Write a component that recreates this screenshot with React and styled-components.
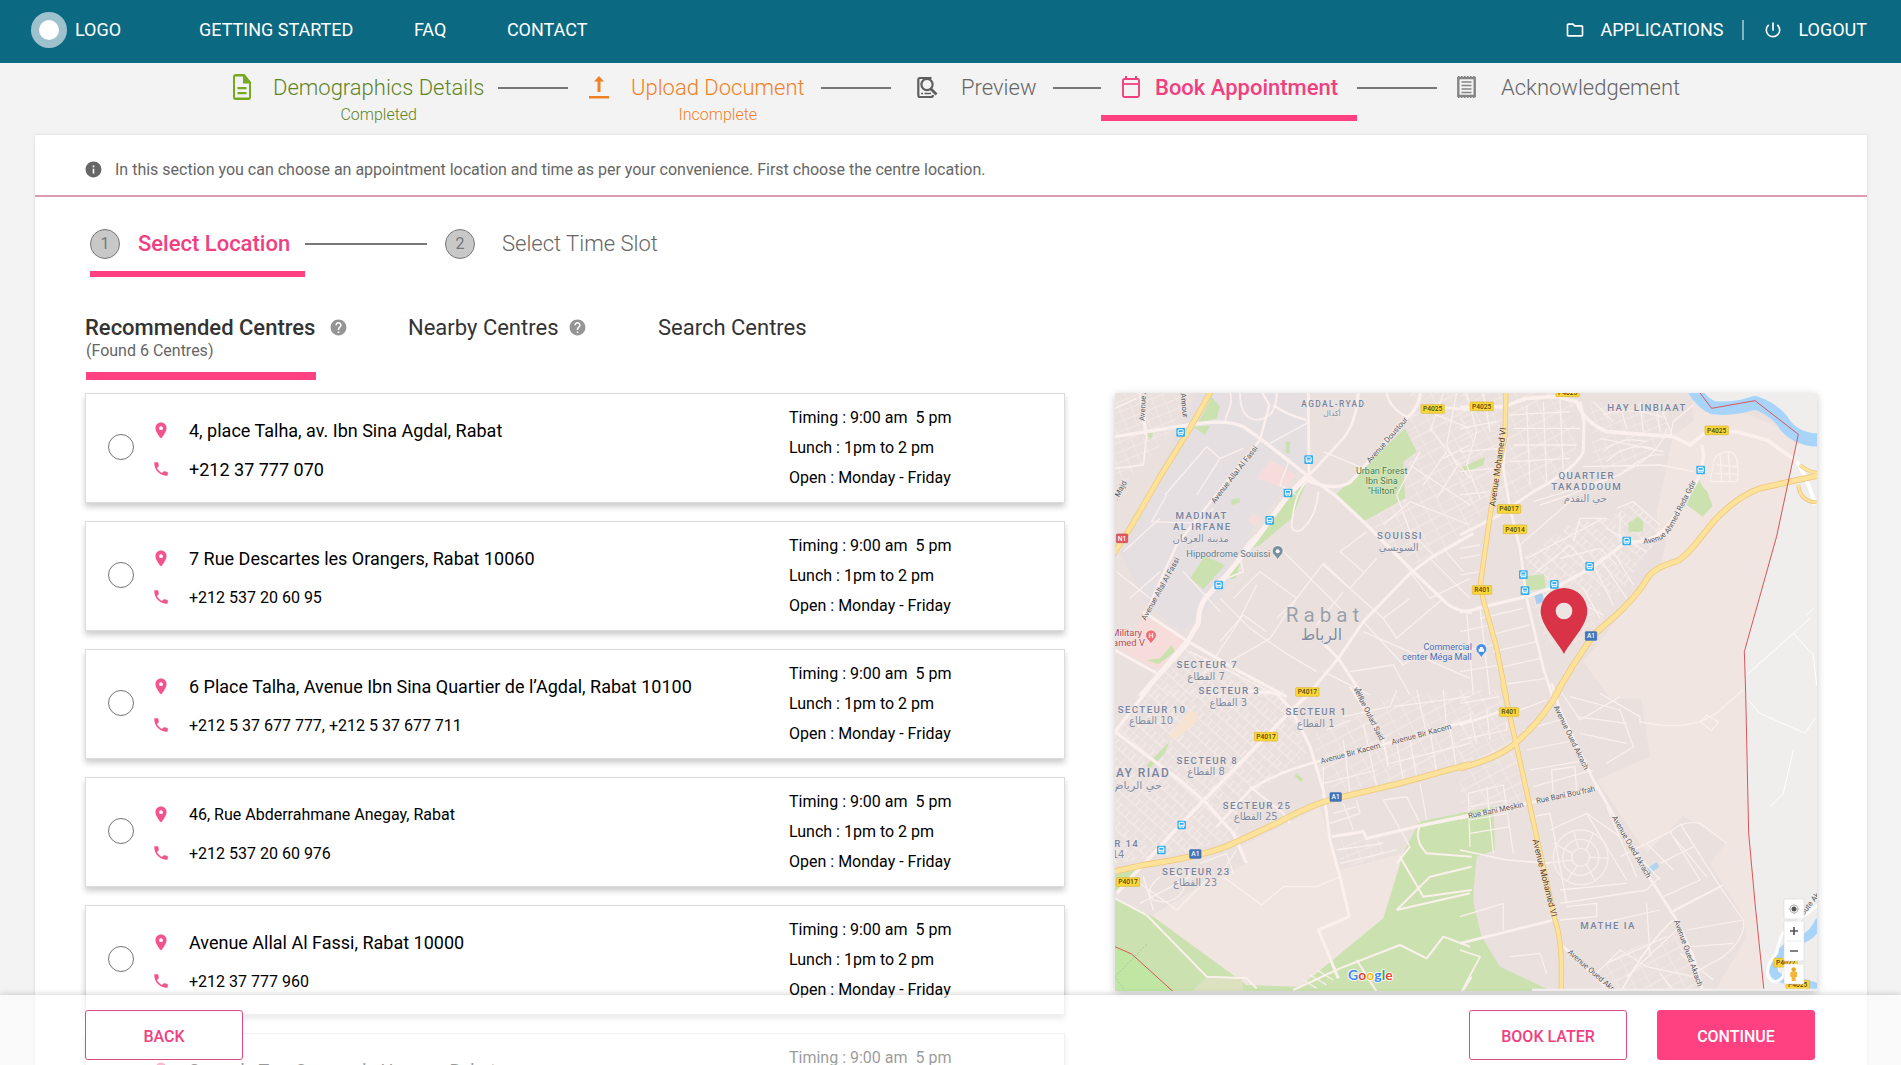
import React from "react";
import styled, { createGlobalStyle, css } from "styled-components";
import {
  MdInfo, MdHelp, MdPlace, MdPhone, MdOutlineFolder, MdPowerSettingsNew,
} from "react-icons/md";

const PINK = "#ff4081";
const PINK_TEXT = "#f0407f";

const GlobalStyle = createGlobalStyle`
  *, *::before, *::after { box-sizing: border-box; }
  body {
    margin: 0;
    background: #f3f3f3;
    font-family: Roboto, "Liberation Sans", sans-serif;
    overflow: hidden;
  }
`;

const Page = styled.div`
  position: relative;
  width: 1901px;
  height: 1065px;
  overflow: hidden;
  background: #f3f3f3;
`;

/* ---------- header ---------- */

const Header = styled.header`
  display: flex;
  align-items: center;
  height: 63px;
  padding: 0 34px 3px 31px;
  background: #0c6982;
  color: #fff;
  font-size: 18px;
`;

const Logo = styled.div`
  display: flex;
  align-items: center;
  gap: 8px;
  width: 168px;
`;

const LogoName = styled.span`
  padding-bottom: 2px;
`;

const LogoMark = styled.span`
  display: grid;
  place-items: center;
  width: 36px;
  height: 36px;
  border-radius: 50%;
  background: #9dc2cd;
  &::after {
    content: "";
    width: 20px;
    height: 20px;
    border-radius: 50%;
    background: #fff;
  }
`;

const Nav = styled.nav`
  display: flex;
  gap: 60.5px;
  flex: 1;
  padding-bottom: 2px;
`;

const UserLinks = styled.div`
  display: flex;
  align-items: center;
  padding-bottom: 1px;
`;

const UserLink = styled.span`
  display: flex;
  align-items: center;
  gap: ${(p) => p.$gap}px;
`;

const Divider = styled.span`
  width: 2px;
  height: 20px;
  margin: 0 19px 0 19px;
  background: #86b4c1;
`;

/* ---------- progress stepper ---------- */

const Stepper = styled.div`
  display: flex;
  height: 72px;
  padding-left: 233px;
`;

const Step = styled.div`
  display: flex;
  align-items: flex-start;
  flex: none;
  gap: ${(p) => p.$gap}px;
  width: ${(p) => p.$width}px;
  height: 58px;
  padding: 11px 0 0 ${(p) => p.$inset || 0}px;
  color: ${(p) => p.$color};
  border-bottom: 6px solid ${(p) => (p.$active ? PINK : "transparent")};
  svg { flex: none; }
`;

const StepText = styled.div`
  display: flex;
  flex-direction: column;
  align-items: center;
  gap: 3px;
  white-space: nowrap;
`;

const StepName = styled.span`
  font-size: 22px;
  line-height: 28px;
  font-weight: ${(p) => (p.$active ? 500 : 300)};
`;

const StepState = styled.span`
  font-size: 16px;
  line-height: 20px;
  font-weight: 300;
`;

const Connector = styled.span`
  flex: none;
  width: ${(p) => p.$width}px;
  height: 2px;
  margin: ${(p) => p.$top}px ${(p) => p.$after}px 0 ${(p) => p.$before}px;
  background: #777;
`;

/* ---------- card ---------- */

const Panel = styled.main`
  width: 1832px;
  height: 930px;
  margin-left: 35px;
  background: #fff;
  box-shadow: 0 0 3px rgba(0, 0, 0, 0.12);
`;

const Notice = styled.div`
  display: flex;
  align-items: center;
  gap: 12.5px;
  height: 62px;
  padding: 8px 0 0 48.5px;
  border-bottom: 2px solid #d99ab2;
  color: #666;
  font-size: 16px;
`;

const SubSteps = styled.div`
  display: flex;
  align-items: flex-start;
  height: 82px;
  margin: 31px 0 0 55px;
`;

const SubStep = styled.div`
  display: flex;
  align-items: center;
  flex: none;
  gap: ${(p) => p.$gap}px;
  width: ${(p) => p.$width}px;
  height: 49px;
  padding-bottom: 12px;
  font-size: 22px;
  white-space: nowrap;
  font-weight: ${(p) => (p.$active ? 500 : 300)};
  color: ${(p) => (p.$active ? PINK_TEXT : "#666")};
  border-bottom: 6px solid ${(p) => (p.$active ? PINK : "transparent")};
`;

const StepNumber = styled.span`
  display: grid;
  place-items: center;
  width: 30px;
  height: 30px;
  border: 1px solid #777;
  border-radius: 50%;
  background: #c8c8c8;
  color: #777;
  font-size: 16px;
  font-weight: 400;
`;

const Tabs = styled.div`
  display: flex;
  height: 83px;
  padding-left: 50px;
`;

const Tab = styled.div`
  flex: none;
  width: ${(p) => p.$width}px;
  color: #333;
  padding-top: 3px;
`;

const TabTitle = styled.div`
  display: flex;
  align-items: center;
  gap: ${(p) => p.$gap || 9.5}px;
  height: 28px;
  font-size: 22px;
  white-space: nowrap;
  font-weight: ${(p) => (p.$active ? 500 : 400)};
  svg { color: #959595; margin-top: 1px; }
`;

const TabNote = styled.div`
  height: 31px;
  padding-left: 1px;
  color: #666;
  font-size: 16px;
  line-height: 20px;
`;

const TabBar = styled.div`
  width: 230px;
  height: 8px;
  margin: 0 0 0 1px;
  background: ${PINK};
`;

const Content = styled.div`
  display: flex;
  gap: 50px;
  padding-left: 50px;
`;

const CentreList = styled.div`
  display: flex;
  flex-direction: column;
  gap: 18px;
  width: 980px;
`;

const CentreCard = styled.article`
  display: flex;
  align-items: center;
  height: 110px;
  padding-left: 22px;
  background: #fff;
  border: 1px solid #dcdcdc;
  box-shadow: 0 4px 6px rgba(0, 0, 0, 0.2);
`;

const Radio = styled.span`
  width: 26px;
  height: 26px;
  margin: 0 17px 2px 0;
  border: 1px solid #757575;
  border-radius: 50%;
  background: #fff;
`;

const CentreInfo = styled.div`
  display: flex;
  flex-direction: column;
  gap: 15px;
  width: 638px;
  padding-top: 3px;
`;

const InfoLine = styled.div`
  display: flex;
  align-items: center;
  gap: 18px;
  height: 24px;
  color: #000;
  font-size: ${(p) => (p.$small ? 16 : 18)}px;
  white-space: nowrap;
  svg { flex: none; width: 20px; color: #f4528c; }
`;

const Hours = styled.div`
  font-size: 16px;
  line-height: 30px;
  white-space: pre;
  color: #000;
`;

/* ---------- map ---------- */

const MapFrame = styled.div`
  width: 702px;
  height: 598px;
  overflow: hidden;
  box-shadow: 0 2px 8px rgba(0, 0, 0, 0.22);
  svg { display: block; }
`;

const Road = styled.path`
  fill: none;
  stroke: ${(p) => p.$color || "#fcf0ee"};
  stroke-width: ${(p) => p.$w || 9};
  stroke-linejoin: round;
`;

const Land = styled.path`
  fill: ${(p) => p.$fill || "#cbe2b0"};
`;

const MapText = styled.text`
  font-family: Roboto, "DejaVu Sans", sans-serif;
  text-anchor: middle;
  paint-order: stroke;
  stroke: rgba(248, 240, 238, 0.6);
  stroke-width: 3px;
  ${(p) => p.$kind === "area" && css`
    font-size: 29px; font-weight: 500; letter-spacing: 4.2px; fill: #74849f;
  `}
  ${(p) => p.$kind === "arabic" && css`
    font-family: "DejaVu Sans", sans-serif; font-size: 30px; fill: #7f8ba1;
  `}
  ${(p) => p.$kind === "city" && css`
    font-size: 62px; letter-spacing: 15px; fill: #9b9fa9;
  `}
  ${(p) => p.$kind === "street" && css`
    font-size: 23px; fill: #555b63;
  `}
  ${(p) => p.$kind === "avenue" && css`
    font-size: 26px; fill: #5d3b1d;
  `}
  ${(p) => p.$kind === "place" && css`
    font-size: 27px; fill: ${p.$fill};
  `}
`;

const BadgeText = styled.text`
  font-family: Roboto, sans-serif;
  font-size: 20px;
  font-weight: 500;
  text-anchor: middle;
  fill: ${(p) => p.$fill || "#53471c"};
`;

const GoogleText = styled.text`
  font-family: Lato, Roboto, sans-serif;
  font-size: 42px;
  font-weight: 700;
  paint-order: stroke;
  stroke: #fff;
  stroke-width: 5px;
`;

/* All map geometry is expressed in a 2106 x 1794 canvas, split in four tiles. */
const NW = "translate(-15 -24)";
const NE = "translate(1035 -24)";
const SW = "translate(-15 891)";
const SE = "translate(1035 891)";

const HIGHWAYS = [
  [NW, "M305 15L240 130L150 275L60 430L5 515", 14],
  [NE, "M138 15L135 150L95 360L62 590Q66 640 80 680L110 790L140 940", 12],
  [SE, "M128 -20L170 170L210 350L285 690Q310 760 303 910", 12],
  [NE, "M1080 270L900 310Q830 335 760 410L700 485Q660 530 640 532Q580 550 562 580Q540 620 480 680L400 750L340 840L283 935", 15],
  [SE, "M300 -5Q250 90 160 165Q110 205 0 235", 15],
  [SW, "M1080 222L870 280L700 320Q620 335 500 400L370 460Q300 495 100 525L10 545", 15],
  [NE, "M1020 240Q1045 262 1075 264M1015 300Q1020 350 1070 352", 8],
];

const ROADS = [
  [NW, "M15 155L235 120Q350 100 400 125L450 160L590 270L680 335L760 410L910 560L1010 655Q1040 680 1085 682", 10],
  [NW, "M455 20L478 60L450 165L310 340L200 480L100 700", 7],
  [NW, "M595 20L597 270M745 20Q740 110 700 160L600 268", 8],
  [NW, "M590 275L535 330L440 460L350 570L285 640Q265 670 265 715L235 765L90 935", 15],
  [NW, "M590 285Q670 320 720 292L780 225L880 105Q925 80 932 20", 10],
  [NW, "M100 680L235 770L390 860L530 935M15 795L150 870L240 770", 9],
  [NW, "M1090 445L960 520L900 565L760 710L685 820L590 935M640 775L685 820L760 935", 9],
  [NW, "M590 290Q550 330 545 425Q555 450 580 430Q620 390 625 320M350 580L400 560L390 520Q400 480 440 450", 5],
  [NW, "M100 60L110 150L100 240L15 250M90 24L105 150M360 24Q370 50 350 90L345 112M15 70L80 40M390 24Q390 100 440 105Q500 100 500 24", 5],
  [NW, "M830 24Q840 70 890 95M940 60L1080 75M490 60Q530 90 590 105", 7],
  [NE, "M0 68L130 65L200 40L290 35L350 50Q370 110 440 140L640 155L690 180L740 140L830 140L920 165L1020 235", 11],
  [NE, "M360 50L372 110L370 200Q350 250 220 320L110 395L0 450", 9],
  [NE, "M135 150L130 250L150 370L180 490L200 640L250 850L278 935", 8],
  [NE, "M0 680Q30 680 60 668L200 635L300 600L400 545L500 470Q590 480 640 400L710 290Q740 220 725 180", 10],
  [NE, "M370 245L600 240L700 260M240 360L330 330L450 280Q600 220 620 130M0 490L60 480M630 155L640 110L700 60", 4],
  [SW, "M380 0L500 10L545 60L600 170L640 300L660 450L690 560L718 680L625 720L685 865", 9],
  [SW, "M620 -10L545 60L215 400L20 610", 11],
  [SW, "M15 125L215 275L290 340L370 430L410 520M120 -10L15 125", 10],
  [SW, "M1085 90L850 155L640 210Q500 245 420 300L320 410", 8],
  [SW, "M720 -10L820 150L835 230M420 290L520 370L540 400", 6],
  [SW, "M1085 375L940 405L770 445L760 425L665 440", 10],
  [SW, "M15 625L110 675L290 860L410 865L440 895M550 900L690 835L870 765L950 805L1000 740L1080 770", 6],
  [SW, "M930 405Q910 450 950 490L1085 500M870 500L940 620L1085 600M860 660L1080 610M860 660L960 560L1085 530M900 470L860 520M1060 900L1085 860M740 810L800 905", 6],
  [SE, "M275 -20L300 60L400 270L560 550L650 690L700 800L730 910", 8],
  [SE, "M0 385L200 340L410 295M0 760L290 688M305 765L460 910M0 105L120 65", 8],
  [SE, "M0 480L140 510L270 520M0 780L60 800L5 905M630 670L790 585M640 690Q560 760 480 910", 5],
];

const FINE = [
  [NW, "M165 330L290 185L330 220L400 190M125 410L170 330M125 410L270 415L310 370M330 220L260 330M470 180L600 110M640 200L760 250M540 220L510 300L560 330M370 640L450 560L560 640L640 535L720 610L800 520M330 640L420 730L520 800L620 860M440 600L380 720L280 870M560 640L480 760L360 830M640 540L820 700L900 640M700 620L620 720M760 560L690 500L770 440M820 700L860 760L1000 640M760 710L880 840L960 780M500 480L700 680"],
  [NW, "M1000 220L1080 180M960 130L1080 280M900 240L1080 360M930 200L860 330L900 440L980 520M820 420L900 350L1080 420M980 90L1080 130M1000 24L960 140M1040 24L1010 180L1040 240M940 300L1010 200M980 340L1050 230M900 560L960 640L1080 580M960 520L1080 640M1000 490L1060 560"],
  [NW, "M500 700L560 640M220 560L330 680M240 800L500 930M330 770L400 690L470 740M640 860L780 930M720 860L850 840L900 930M760 740L1080 880M20 560L120 640M40 500L150 400M60 640L150 560"],
  [NE, "M0 130L110 110M0 200L120 190M0 260L100 250M20 24L50 140L20 240L60 340M70 24L90 140M150 90L330 80M160 130L360 130M160 180L350 180M150 230L330 220M200 60L210 300M250 50L260 290M300 45L310 260M0 330L90 320M0 520L60 510M0 570L60 560M60 700L190 670M90 750L210 720M100 800L230 770M110 850L240 820M120 900L260 880M0 740L90 720M0 800L100 780M0 860L120 840M20 680L40 930M60 670L90 930"],
  [NE, "M420 160L610 200M430 90Q500 60 620 100M400 50L460 110M480 60L500 130M540 50L550 140M590 60L600 140M640 160L600 60M220 350L480 270Q560 200 610 210M440 230Q500 170 580 190M430 200Q480 150 560 170M180 480L340 340M200 520L430 400M230 560L330 480L400 560M300 520L420 490L470 540M340 470L360 400L440 400M470 370L520 350L600 420M480 470L480 380M440 430L560 500M420 520L500 640M460 500L520 600M400 540L460 660M300 620L430 690M260 620L330 760M370 610L420 700"],
  [NE, "M760 240Q760 200 810 200Q840 205 832 290L750 290ZM770 240L832 245M780 205L785 290M805 200L810 290M765 265L832 268"],
  [SW, "M640 230L640 330M700 150L720 310M760 100L800 290M700 80L840 50L860 0M650 120L720 90M640 280L800 240M860 160L880 270M900 150L920 260M960 120L980 250M1020 110L1040 240M840 220L1080 160M850 50L1080 20M920 0L950 130M1000 0L1010 110M660 400L750 370L740 330M670 370L740 350M690 520L860 480M680 480L820 460M700 340L730 420M820 330L900 470M820 330L890 320L930 400M930 280L950 390"],
  [SW, "M340 560L455 645L520 590L620 590L690 560M380 480L340 540M60 560Q120 600 200 660L300 560M90 640L240 560L230 530M150 560Q100 600 130 630Q190 650 220 600Q230 560 180 550M100 560L130 660M270 520L350 490L370 550M620 840L670 870M600 855L650 885M580 870L620 895"],
  [SE, "M0 40L120 20M0 150L140 120L140 100M30 70L50 160M80 60L90 150M180 60L260 30M190 120L300 90M200 180L350 150M210 240L380 210M220 290L400 240M330 20L480 60L520 170L440 220M350 80L500 100M360 130L500 160M300 0L360 90L480 20M420 10L540 80L540 100M540 95Q700 130 780 60L850 0M720 95L740 75L775 95L755 122Z"],
  [SE, "M25 310L130 285L160 490M25 310L30 470M80 290L100 490M30 350L140 330M30 390L140 370M30 430L150 410M275 240L345 230L350 310L280 320ZM220 380L270 370L320 640M270 420L380 370L480 440M300 640L560 600L600 560M380 370L500 570M440 350L530 560M300 600L500 580M320 650L410 640L410 680L300 690M480 500L630 425L720 570L610 620M560 460L640 540M530 490L600 570M630 425Q670 390 720 400L800 460M640 440L740 560M600 520L700 470M660 400L780 590L850 690Q860 740 790 800L700 850M640 660L780 590M680 720L850 690M690 770L820 760M560 640L570 800M420 700L600 660M440 820L620 740M500 860L650 720M400 860L480 780L560 830L700 860M600 850L640 900M660 790L760 870M150 800L240 790L260 850M0 680L130 640L130 720"],
];

const GREENS = [
  [NW, "M305 35L330 65L320 100L262 118ZM250 125L300 122L285 150ZM108 145L130 143L122 165ZM885 130L920 200L880 230L885 340L760 410L676 330ZM363 345L388 338L390 352L366 360ZM590 292L545 400L450 480L415 495L460 435L540 330ZM410 500Q385 540 380 575Q365 590 352 575ZM285 512L345 540L280 613L240 580ZM527 170H540V205H527ZM110 825L150 820L185 780L195 800L145 838Z"],
  [NE, "M0 250L75 215L70 240L10 265ZM505 415L535 395L550 410L548 440H505ZM715 275Q720 300 742 320L758 362L728 395L680 360ZM190 575L252 567L258 610L200 618Z"],
  [SW, "M10 620L130 680L410 885L570 890L820 685L880 490L915 420L925 395L1090 362V910H10ZM15 545L75 540L15 612ZM178 155L165 190L115 240L110 225L145 190ZM558 250L580 268L572 277L554 258Z"],
  [SE, "M-2 370L100 350L105 480L50 500L38 630L65 740L120 830L290 910H-2Z"],
];

const LABELS = [
  ["area", NW, 670, 66, "AGDAL-RYAD", 0, 25], ["arabic", NW, 666, 92, "أكدال", 0, 23],
  ["area", NW, 275, 402, "MADINAT"], ["area", NW, 277, 435, "AL IRFANE"], ["arabic", NW, 272, 470, "مدينة العرفان"],
  ["area", NW, 870, 461, "SOUISSI"], ["arabic", NW, 866, 497, "السويسي"],
  ["city", NW, 645, 711, "Rabat"], ["arabic", NW, 634, 765, "الرباط", 0, 47],
  ["area", NW, 292, 850, "SECTEUR 7"], ["arabic", NW, 288, 885, "القطاع \u200e7"],
  ["area", NW, 358, 926, "SECTEUR 3"], ["arabic", SW, 355, 48, "القطاع \u200e3"],
  ["area", SW, 126, 69, "SECTEUR 10"], ["arabic", SW, 123, 103, "القطاع \u200e10"],
  ["area", SW, 619, 76, "SECTEUR 1"], ["arabic", SW, 617, 110, "القطاع \u200e1"],
  ["area", SW, 292, 221, "SECTEUR 8"], ["arabic", SW, 288, 256, "القطاع \u200e8"],
  ["area", SW, 84, 260, "HAY RIAD", 0, 36], ["arabic", SW, 78, 298, "حي الرياض", 0, 33],
  ["area", SW, 441, 356, "SECTEUR 25"], ["arabic", SW, 437, 391, "القطاع \u200e25"],
  ["area", SW, 50, 470, "R 14"], ["arabic", SW, 24, 504, "14"],
  ["area", SW, 259, 554, "SECTEUR 23"], ["arabic", SW, 255, 588, "القطاع \u200e23"],
  ["area", NE, 561, 79, "HAY LINBIAAT"], ["area", NE, 380, 283, "QUARTIER"],
  ["area", NE, 380, 316, "TAKADDOUM"], ["arabic", NE, 376, 352, "حي التقدم"],
  ["area", SE, 444, 717, "MATHE IA"],
  ["street", NW, 379, 273, "Avenue Allal Al Fassi", -52], ["street", NW, 158, 615, "Avenue Allal Al Fassi", -61],
  ["street", NW, 837, 170, "Avenue Doustour", -49], ["street", NW, 106, 60, "Avenue A", -87],
  ["street", NW, 215, 62, "Annour", 84], ["street", NW, 36, 320, ". Majd", -62],
  ["street", NW, 745, 930, "Ave", 62],
  ["street", SW, 770, 75, "venue Oulad Said", 63],
  ["street", SW, 723, 197, "Avenue Bir Kacem", -15], ["street", SW, 936, 140, "Avenue Bir Kacem", -15],
  ["avenue", NE, 122, 247, "Avenue Mohamed VI", -82], ["avenue", SE, 246, 566, "Avenue Mohamed VI", 76],
  ["street", SE, 327, 146, "Avenue Oued Akrach", 64], ["street", SE, 508, 474, "Avenue Oued Akrach", 60],
  ["street", SE, 678, 792, "Avenue Oued Akrach", 70], ["street", SE, 392, 850, "Avenue Oued Akra", 41],
  ["street", SE, 109, 368, "Rue Bani Meskin", -12], ["street", SE, 318, 322, "Rue Bani Bou'frah", -12],
  ["street", SE, 1056, 646, "oute Ak", -52],
  ["place", NW, 355, 515, "Hippodrome Souissi", 0, 28, "#5d7c90"],
  ["place", NW, 815, 266, "Urban Forest", 0, 27, "#3b8044"], ["place", NW, 815, 297, "Ibn Sina", 0, 27, "#3b8044"],
  ["place", NW, 817, 327, "\"Hilton\"", 0, 27, "#3b8044"],
  ["place", NW, 1013, 794, "Commercial", 0, 27, "#436db8"], ["place", NW, 981, 825, "center Méga Mall", 0, 27, "#436db8"],
  ["place", NW, 50, 753, "Military", 0, 28, "#b04c55"], ["place", NW, 29, 783, "Mohamed V", 0, 28, "#b04c55"],
];

const SHIELDS = [
  [NW, 968, 72, "P4025"], [NE, 65, 64, "P4025"], [NE, 323, 22, "P4025"], [NE, 770, 136, "P4025"],
  [NE, 147, 372, "P4017"], [NE, 165, 433, "P4014"], [NE, 66, 615, "R401"], [NW, 592, 921, "P4017"],
  [SW, 468, 140, "P4017"], [SW, 54, 576, "P4017"], [SE, 147, 66, "R401"], [SE, 977, 818, "P4022"], [SE, 1013, 884, "P4025"],
];

const STOPS = [
  [NW, 212, 142], [NW, 596, 224], [NW, 534, 324], [NW, 479, 406], [NW, 326, 600],
  [NE, 722, 255], [NE, 500, 468], [NE, 389, 544], [NE, 190, 569], [NE, 195, 617], [NE, 283, 598],
  [SW, 215, 405], [SW, 154, 480],
];

function Shield({ x, y, label, width, fill = "#fcd836", border = "#d8b431", color }) {
  return (
    <g>
      <rect x={x - width / 2} y={y - 13} width={width} height={26} rx={2} fill={fill} stroke={border} strokeWidth={2} />
      <BadgeText x={x} y={y + 7} $fill={color}>{label}</BadgeText>
    </g>
  );
}

function BusStop({ x, y }) {
  return (
    <g transform={`translate(${x - 13} ${y - 13})`}>
      <rect width={26} height={26} rx={3} fill="#35aef0" />
      <rect x={5.5} y={5} width={15} height={14} rx={2} fill="none" stroke="#fff" strokeWidth={3} />
      <path d="M6 14H20M8 19V22M18 19V22" stroke="#fff" strokeWidth={3} />
    </g>
  );
}

function PlacePin({ x, y, fill, children }) {
  return (
    <g transform={`translate(${x} ${y})`}>
      <path d="M0 24C-4 12-16 8-16-3A16 16 0 1 1 16-3C16 8 4 12 0 24Z" fill={fill} stroke="#fff" strokeWidth={1.5} />
      {children}
    </g>
  );
}

function CityMap() {
  return (
    <MapFrame>
      <svg width="702" height="598" viewBox="0 0 2106 1794">
        <defs>
          <pattern id="grid-a" width="34" height="46" patternUnits="userSpaceOnUse" patternTransform="rotate(42)">
            <path d="M0 0H34M0 0V46M17 0V23M0 23H34" fill="none" stroke="#f8edeb" strokeWidth="3.5" />
          </pattern>
          <pattern id="grid-b" width="44" height="60" patternUnits="userSpaceOnUse" patternTransform="rotate(-28)">
            <path d="M0 0H44M0 0V60M0 30H44" fill="none" stroke="#f7ecea" strokeWidth="3.5" />
          </pattern>
          <pattern id="grid-c" width="28" height="34" patternUnits="userSpaceOnUse" patternTransform="rotate(68)">
            <path d="M0 0H28M0 0V34" fill="none" stroke="#f8edeb" strokeWidth="3.5" />
          </pattern>
        </defs>
        <rect width="2106" height="1794" fill="#eae0de" />

        <g transform={NW}>
          <Land $fill="#e6dfe1" d="M260 24H590V230L430 430L330 640L215 740L110 660L30 500Z" />
          <Land $fill="#f6dddb" d="M480 225L560 270L525 310L440 280ZM430 385L455 400L435 425L415 405ZM105 690L235 770L150 855L30 795Z" />
          <Land $fill="url(#grid-c)" d="M15 24H250L160 170L15 330Z" />
          <Land $fill="url(#grid-b)" d="M900 24H1090V440L910 540L770 410L890 330Z" />
          <Land $fill="url(#grid-a)" d="M230 790L530 935H80Z" />
        </g>
        <g transform={NE}>
          <Land $fill="#f1e5e1" d="M700 24L1020 150L860 800V940H450L370 830L560 590L590 450L700 260Z" />
          <Land $fill="#f1e5e1" d="M640 150L760 70L1015 148L980 290L740 430L600 520L590 380Z" />
          <Land $fill="#e9dfdf" d="M530 480L620 460L600 540L530 600Z" />
          <Land $fill="url(#grid-b)" d="M0 24H340L350 240L190 330L100 370L0 430Z" />
          <Land $fill="url(#grid-a)" d="M340 410L440 400L520 350L610 440L480 620L260 660L190 520Z" />
          <Land $fill="url(#grid-c)" d="M390 50L620 60L630 150L500 260L400 250ZM210 640L330 610L440 690L350 790L260 780Z" />
        </g>
        <g transform={SW}>
          <Land $fill="#f1e5e1" d="M390 470L630 350L660 450L690 540L880 490L820 690L570 895H410L120 680L250 600L410 520Z" />
          <Land $fill="url(#grid-a)" d="M120 0H520L545 60L590 190L380 360L390 440L210 490L15 520V125Z" />
          <Land $fill="url(#grid-b)" d="M610 130L830 20L1090 0V210L680 310L620 230Z" />
          <Land $fill="url(#grid-c)" d="M690 450L820 440L820 510L690 530Z" />
        </g>
        <g transform={SE}>
          <Land $fill="#f1e5e1" d="M540 -5H858L866 430L912 910H760L860 740L850 680L750 520L800 455L670 378L560 490L410 270L570 200Z" />
          <Land $fill="url(#grid-b)" d="M0 0H120L200 330L0 370ZM460 790L680 720L740 905H380Z" />
        </g>

        {GREENS.map(([t, d], i) => <Land key={i} transform={t} d={d} />)}
        <Land transform={SW} $fill="#bfe6a3" d="M10 765L65 792L195 910H10Z" />
        <Land transform={SW} $fill="#dce1c0" d="M290 862H395L400 910H240Z" />
        <Land transform={SW} $fill="#f6e3d2" d="M235 65L262 68L260 95L200 145L175 140Z" />
        <Land transform={SE} $fill="#b3d4ee" d="M562 535L590 517L598 530L570 550Z" />
        <Land transform={NE} $fill="#a9cdec" d="M222 628L246 622L252 650L230 658Z" />

        <path
          d="M1755 0L1790 46L1920 23L2050 124L1985 430L1888 776L1892 900L1901 1320L1920 1530L1947 1794H2106V0Z"
          fill="#efeeed"
        />
        {FINE.map(([t, d], i) => <Road key={i} transform={t} d={d} $w={3.8} $color="#faf0ee" />)}
        {ROADS.map(([t, d, w], i) => <Road key={i} transform={t} d={d} $w={w} />)}
        <g transform={NE}>
          <Road $w={40} $color="#a8d4fa" d="M700 10Q725 55 760 68Q820 75 885 53Q935 70 965 105Q1000 165 1080 165" />
          <Road $w={12} $color="#fff" d="M1010 230Q1035 260 1066 360" />
          <Road $w={3} $color="#fff" d="M860 870L1000 745L1050 700M1000 745L1060 810L1070 900M1040 690L1060 670" />
        </g>
        <g transform={SE}>
          <Road $w={26} $color="#a8d4fa" d="M1080 690Q1060 735 1030 745Q960 770 940 830Q935 870 1000 870L1080 895" />
          <Road $w={9} $color="#fff" d="M1080 640Q1030 680 980 720Q960 730 950 790Q915 830 925 860Q940 890 970 860L980 800" />
          <Road $w={3} $color="#fff" d="M865 30L900 70L1035 130L1065 85M1000 180L970 310L930 350" />
          <circle cx="362" cy="502" r="27" fill="none" stroke="#f9eeec" strokeWidth="4" />
          <circle cx="362" cy="502" r="54" fill="none" stroke="#f9eeec" strokeWidth="4" />
          <circle cx="362" cy="502" r="82" fill="none" stroke="#f9eeec" strokeWidth="4" />
          <Road $w={4} $color="#f9eeec" d="M280 460L338 490M340 420L355 475M400 430L378 480M389 502L445 505M320 575L350 530M380 525L405 572M250 520L335 510" />
        </g>

        {HIGHWAYS.map(([t, d, w], i) => <Road key={i} transform={t} d={d} $w={w + 4} $color="#eec983" />)}
        {HIGHWAYS.map(([t, d, w], i) => <Road key={i} transform={t} d={d} $w={w - 1} $color="#fde29a" />)}
        <Road $w={3} $color="#d9565b" d="M1755 0L1790 46L1920 23L2050 124L1985 430L1888 776L1892 900L1901 1320L1920 1530L1947 1794" />
        <Road transform={SW} $w={3} $color="#d9565b" d="M10 768L65 792L195 910" />
        <Road transform={SW} $w={2.5} $color="#a2b9a2" strokeDasharray="6 5" d="M110 763L15 860L50 910" />

        {STOPS.map(([t, x, y], i) => <g key={i} transform={t}><BusStop x={x} y={y} /></g>)}
        {LABELS.map(([kind, t, x, y, label, angle = 0, size, fill], i) => (
          <g key={i} transform={t}>
            <MapText
              $kind={kind}
              $fill={fill}
              transform={`translate(${x} ${y}) rotate(${angle})`}
              style={size ? { fontSize: size } : undefined}
            >
              {label}
            </MapText>
          </g>
        ))}
        <defs>
          <path id="gdira" d="M1585 452Q1650 450 1675 400L1745 265" />
        </defs>
        <MapText $kind="street" style={{ textAnchor: "start" }}>
          <textPath href="#gdira">Avenue Ahmed Reda Gdira</textPath>
        </MapText>

        {SHIELDS.map(([t, x, y, label], i) => (
          <g key={i} transform={t}><Shield x={x} y={y} label={label} width={label.length > 4 ? 70 : 58} /></g>
        ))}
        {[[NE, 393, 753], [SW, 677, 321], [SW, 256, 492]].map(([t, x, y], i) => (
          <g key={i} transform={t}>
            <Shield x={x} y={y} label="A1" width={34} fill="#4176bd" border="#3567aa" color="#fff" />
          </g>
        ))}
        <g transform={NW}>
          <Shield x={36} y={460} label="N1" width={34} fill="#e0575d" border="#c94a50" color="#fff" />
          <PlacePin x={503} y={501} fill="#78909c"><circle cy="-2" r="6" fill="#fff" /></PlacePin>
          <PlacePin x={123} y={754} fill="#ee6f73"><BadgeText y="4" $fill="#fff">H</BadgeText></PlacePin>
        </g>
        <g transform={NE}>
          <PlacePin x={64} y={795} fill="#4b8ee6">
            <path d="M-8-4H8V5H-8ZM-4-4V-9H4V-4" fill="#fff" />
          </PlacePin>
          <path
            fill="#d83347"
            d="M312 807C296 774 242 722 242 679A70 70 0 0 1 382 679C382 722 328 774 312 807Z"
          />
          <circle cx="312" cy="678" r="25" fill="#eee4e3" />
        </g>

        <GoogleText transform={SW} x="714" y="871">
          <tspan fill="#4285f4">G</tspan><tspan fill="#ea4335">o</tspan><tspan fill="#fbbc05">o</tspan>
          <tspan fill="#4285f4">g</tspan><tspan fill="#34a853">l</tspan><tspan fill="#ea4335">e</tspan>
        </GoogleText>

        <g transform={SE}>
          <rect x="216" y="896" width="855" height="14" fill="#f4f1f0" />
          <g fill="#fff" stroke="#ccc" strokeWidth="1.5">
            <rect x="972" y="627" width="60" height="60" rx="3" />
            <rect x="972" y="693" width="60" height="120" rx="3" />
            <rect x="972" y="822" width="60" height="60" rx="3" />
          </g>
          <path d="M980 753H1024" stroke="#e3e3e3" strokeWidth="2" />
          <circle cx="1002" cy="657" r="7.5" fill="#555" />
          <circle cx="1002" cy="657" r="12" fill="none" stroke="#999" strokeWidth="2" />
          <path d="M1002 641V646M1002 668V673M986 657H991M1013 657H1018" stroke="#999" strokeWidth="2" />
          <path d="M990 723H1014M1002 711V735M990 783H1014" stroke="#555" strokeWidth="5" />
          <circle cx="1001" cy="839" r="7" fill="#eda827" />
          <path d="M991 846H1011V860L1007 862V873H995V862L991 860Z" fill="#f4b53a" />
        </g>
      </svg>
    </MapFrame>
  );
}

/* ---------- step icons ---------- */

const DocumentIcon = () => (
  <svg width="18" height="26" viewBox="0 0 18 26" fill="#76a91e">
    <path fillRule="evenodd" d="M3 0H11.5L18 8V23Q18 26 15.5 26H2.5Q0 26 0 23V3Q0 0 3 0ZM2 2.5V23.5H16V9.5H10V2.5Z" />
    <path d="M4.5 13H13.5V15.2H4.5ZM4.5 18H13.5V20.2H4.5Z" />
  </svg>
);

const UploadIcon = () => (
  <svg width="20" height="26" viewBox="0 0 20 26" fill="#f08127">
    <path d="M10 2L15 7.5H11.5V18H8.5V7.5H5ZM0 22H20V24.5H0Z" />
  </svg>
);

const PreviewIcon = () => (
  <svg width="21" height="26" viewBox="0 0 21 26" fill="none" stroke="#5e5e5e">
    <path d="M14.5 4H3Q1.3 4 1.3 6V21Q1.3 23 3 23H14Q16 23 16 21" strokeWidth="2.2" />
    <circle cx="10" cy="10.5" r="5.6" strokeWidth="2.2" />
    <path d="M13.5 14.5L19.5 20.5" strokeWidth="2.8" />
    <path d="M4 19.6H6M7.5 19.6H14" strokeWidth="1.5" />
  </svg>
);

const CalendarIcon = () => (
  <svg width="18" height="26" viewBox="0 0 18 26" fill="none" stroke={PINK_TEXT}>
    <rect x="1" y="5" width="16" height="18" rx="1.5" strokeWidth="1.9" />
    <path d="M1 10H17" strokeWidth="1.8" />
    <path d="M4 2V5M14 2V5" strokeWidth="2" />
  </svg>
);

const ReceiptIcon = () => (
  <svg width="19" height="26" viewBox="0 0 19 26" fill="none" stroke="#858585">
    <path d="M1.3 4H17.7V22H1.3Z" strokeWidth="2.4" />
    <path d="M1 2.8H18M1 23.3H18" strokeWidth="1.5" strokeDasharray="1.5 1.5" />
    <path d="M4.5 8H14.5M4.5 11.5H14.5M4.5 15H14.5M4.5 18.5H14.5" strokeWidth="1.6" />
  </svg>
);

/* ---------- footer ---------- */

const Footer = styled.footer`
  position: absolute;
  left: 0;
  right: 0;
  bottom: 0;
  display: flex;
  gap: 30px;
  height: 70px;
  padding: 15px 86px 0 85px;
  background: rgba(255, 255, 255, 0.6);
  box-shadow: 0 -1px 6px rgba(0, 0, 0, 0.16);
`;

const Button = styled.button`
  width: 158px;
  height: 50px;
  padding: 3px 0 0;
  border: 1px solid ${(p) => (p.$primary ? PINK : "#dd4a83")};
  border-radius: 3px;
  background: ${(p) => (p.$primary ? PINK : "#fff")};
  color: ${(p) => (p.$primary ? "#fff" : PINK_TEXT)};
  font: 500 16px Roboto, sans-serif;
  margin-right: ${(p) => (p.$push ? "auto" : 0)};
`;

const CENTRES = [
  { address: "4, place Talha, av. Ibn Sina Agdal, Rabat", phone: "+212 37 777 070", largePhone: true },
  { address: "7 Rue Descartes les Orangers, Rabat 10060", phone: "+212 537 20 60 95" },
  { address: "6 Place Talha, Avenue Ibn Sina Quartier de l’Agdal, Rabat 10100", phone: "+212 5 37 677 777, +212 5 37 677 711" },
  { address: "46, Rue Abderrahmane Anegay, Rabat", phone: "+212 537 20 60 976", smallAddress: true },
  { address: "Avenue Allal Al Fassi, Rabat 10000", phone: "+212 37 777 960" },
  { address: "Souq de Tan, Sanouade Hassan, Rabat", phone: "+212 37 777 960" },
];

export default function App() {
  return (
    <Page>
      <GlobalStyle />
      <Header>
        <Logo><LogoMark /><LogoName>LOGO</LogoName></Logo>
        <Nav>
          <span>GETTING STARTED</span>
          <span>FAQ</span>
          <span>CONTACT</span>
        </Nav>
        <UserLinks>
          <UserLink $gap={16}><MdOutlineFolder size={20} />APPLICATIONS</UserLink>
          <Divider />
          <UserLink $gap={15}><MdPowerSettingsNew size={20} />LOGOUT</UserLink>
        </UserLinks>
      </Header>

      <Stepper>
        <Step $width={251} $gap={22} $color="#5f8423">
          <DocumentIcon />
          <StepText><StepName>Demographics Details</StepName><StepState>Completed</StepState></StepText>
        </Step>
        <Connector $width={70} $top={24} $before={14} $after={21} />
        <Step $width={215} $gap={22} $color="#f08127">
          <UploadIcon />
          <StepText><StepName>Upload Document</StepName><StepState>Incomplete</StepState></StepText>
        </Step>
        <Connector $width={70} $top={24} $before={17} $after={26} />
        <Step $width={119} $gap={23} $color="#666">
          <PreviewIcon />
          <StepText><StepName>Preview</StepName></StepText>
        </Step>
        <Connector $width={48} $top={24} $before={17} $after={0} />
        <Step $width={256} $gap={15} $inset={21} $color={PINK_TEXT} $active>
          <CalendarIcon />
          <StepText><StepName $active>Book Appointment</StepName></StepText>
        </Step>
        <Connector $width={80} $top={24} $before={0} $after={20} />
        <Step $width={224} $gap={25} $color="#666">
          <ReceiptIcon />
          <StepText><StepName>Acknowledgement</StepName></StepText>
        </Step>
      </Stepper>

      <Panel>
        <Notice>
          <MdInfo size={19} />
          In this section you can choose an appointment location and time as per your convenience. First choose the centre location.
        </Notice>

        <SubSteps>
          <SubStep $width={215} $gap={18} $active><StepNumber>1</StepNumber>Select Location</SubStep>
          <Connector $width={122} $top={15} $before={0} $after={18} />
          <SubStep $width={220} $gap={27}><StepNumber>2</StepNumber>Select Time Slot</SubStep>
        </SubSteps>

        <Tabs>
          <Tab $width={323}>
            <TabTitle $active $gap={13.5}>Recommended Centres <MdHelp size={19} /></TabTitle>
            <TabNote>(Found 6 Centres)</TabNote>
            <TabBar />
          </Tab>
          <Tab $width={250}><TabTitle>Nearby Centres <MdHelp size={19} /></TabTitle></Tab>
          <Tab $width={200}><TabTitle>Search Centres</TabTitle></Tab>
        </Tabs>

        <Content>
          <CentreList>
            {CENTRES.map((c, i) => (
              <CentreCard key={i}>
                <Radio />
                <CentreInfo>
                  <InfoLine $small={c.smallAddress}><MdPlace size={19} />{c.address}</InfoLine>
                  <InfoLine $small={!c.largePhone}><MdPhone size={18} />{c.phone}</InfoLine>
                </CentreInfo>
                <Hours>{"Timing : 9:00 am  5 pm\nLunch : 1pm to 2 pm\nOpen : Monday - Friday"}</Hours>
              </CentreCard>
            ))}
          </CentreList>
          <CityMap />
        </Content>
      </Panel>

      <Footer>
        <Button $push>BACK</Button>
        <Button>BOOK LATER</Button>
        <Button $primary>CONTINUE</Button>
      </Footer>
    </Page>
  );
}
